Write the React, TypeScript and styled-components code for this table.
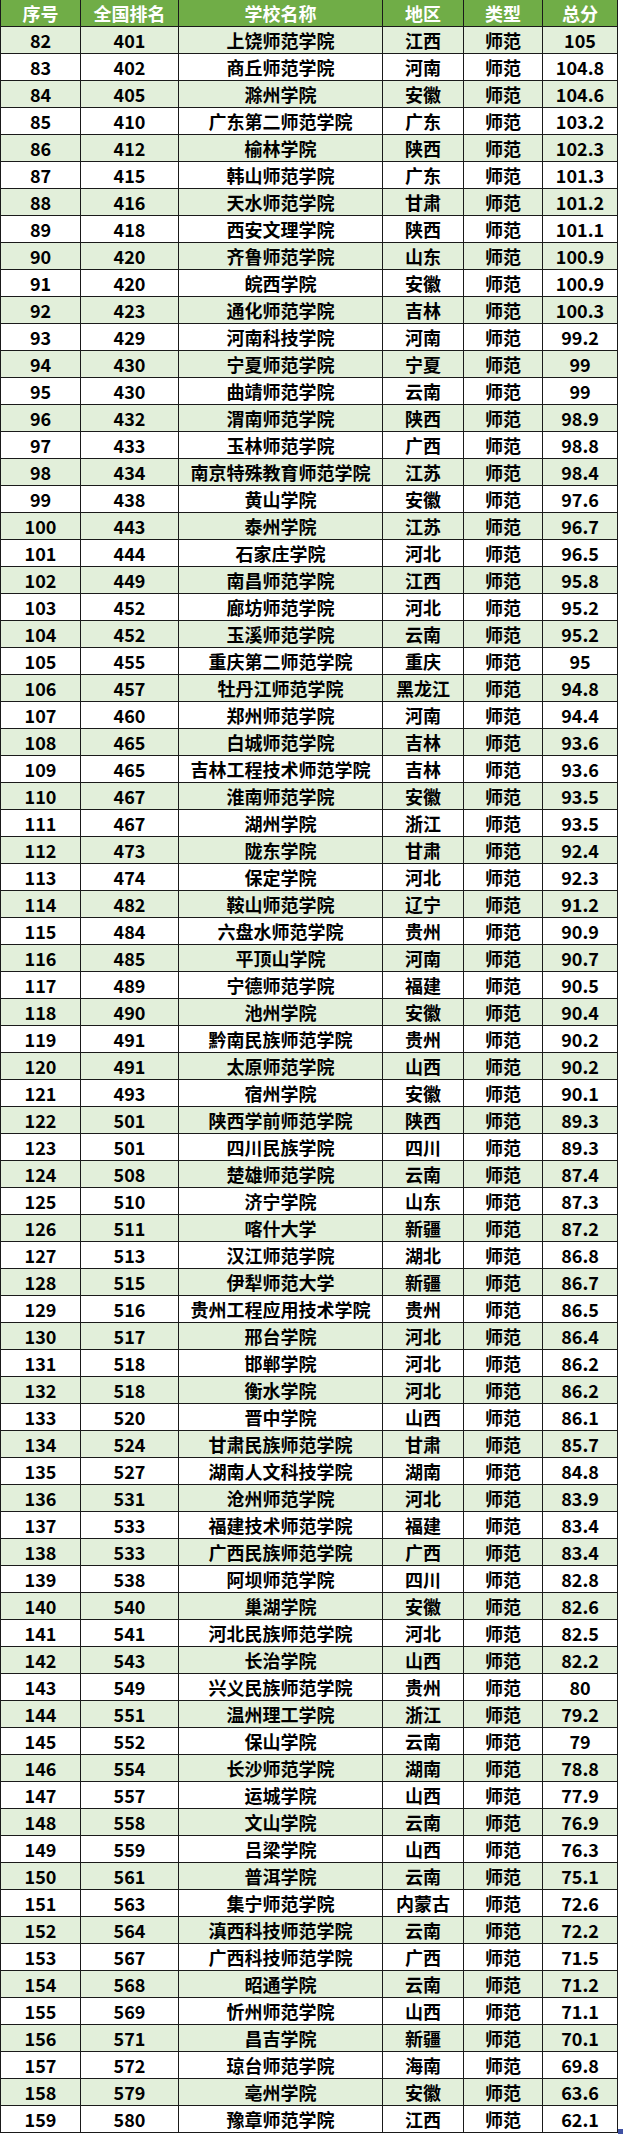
import React from "react";
import styled, { createGlobalStyle } from "styled-components";

const GlobalStyle = createGlobalStyle`
  html, body {
    margin: 0;
    padding: 0;
    background: #ffffff;
  }
  body {
    font-family: "Noto Sans CJK SC", "Noto Sans", sans-serif;
  }
`;

type School = [number, number, string, string, string, string];

const rows: School[] = [
  [82, 401, "上饶师范学院", "江西", "师范", "105"],
  [83, 402, "商丘师范学院", "河南", "师范", "104.8"],
  [84, 405, "滁州学院", "安徽", "师范", "104.6"],
  [85, 410, "广东第二师范学院", "广东", "师范", "103.2"],
  [86, 412, "榆林学院", "陕西", "师范", "102.3"],
  [87, 415, "韩山师范学院", "广东", "师范", "101.3"],
  [88, 416, "天水师范学院", "甘肃", "师范", "101.2"],
  [89, 418, "西安文理学院", "陕西", "师范", "101.1"],
  [90, 420, "齐鲁师范学院", "山东", "师范", "100.9"],
  [91, 420, "皖西学院", "安徽", "师范", "100.9"],
  [92, 423, "通化师范学院", "吉林", "师范", "100.3"],
  [93, 429, "河南科技学院", "河南", "师范", "99.2"],
  [94, 430, "宁夏师范学院", "宁夏", "师范", "99"],
  [95, 430, "曲靖师范学院", "云南", "师范", "99"],
  [96, 432, "渭南师范学院", "陕西", "师范", "98.9"],
  [97, 433, "玉林师范学院", "广西", "师范", "98.8"],
  [98, 434, "南京特殊教育师范学院", "江苏", "师范", "98.4"],
  [99, 438, "黄山学院", "安徽", "师范", "97.6"],
  [100, 443, "泰州学院", "江苏", "师范", "96.7"],
  [101, 444, "石家庄学院", "河北", "师范", "96.5"],
  [102, 449, "南昌师范学院", "江西", "师范", "95.8"],
  [103, 452, "廊坊师范学院", "河北", "师范", "95.2"],
  [104, 452, "玉溪师范学院", "云南", "师范", "95.2"],
  [105, 455, "重庆第二师范学院", "重庆", "师范", "95"],
  [106, 457, "牡丹江师范学院", "黑龙江", "师范", "94.8"],
  [107, 460, "郑州师范学院", "河南", "师范", "94.4"],
  [108, 465, "白城师范学院", "吉林", "师范", "93.6"],
  [109, 465, "吉林工程技术师范学院", "吉林", "师范", "93.6"],
  [110, 467, "淮南师范学院", "安徽", "师范", "93.5"],
  [111, 467, "湖州学院", "浙江", "师范", "93.5"],
  [112, 473, "陇东学院", "甘肃", "师范", "92.4"],
  [113, 474, "保定学院", "河北", "师范", "92.3"],
  [114, 482, "鞍山师范学院", "辽宁", "师范", "91.2"],
  [115, 484, "六盘水师范学院", "贵州", "师范", "90.9"],
  [116, 485, "平顶山学院", "河南", "师范", "90.7"],
  [117, 489, "宁德师范学院", "福建", "师范", "90.5"],
  [118, 490, "池州学院", "安徽", "师范", "90.4"],
  [119, 491, "黔南民族师范学院", "贵州", "师范", "90.2"],
  [120, 491, "太原师范学院", "山西", "师范", "90.2"],
  [121, 493, "宿州学院", "安徽", "师范", "90.1"],
  [122, 501, "陕西学前师范学院", "陕西", "师范", "89.3"],
  [123, 501, "四川民族学院", "四川", "师范", "89.3"],
  [124, 508, "楚雄师范学院", "云南", "师范", "87.4"],
  [125, 510, "济宁学院", "山东", "师范", "87.3"],
  [126, 511, "喀什大学", "新疆", "师范", "87.2"],
  [127, 513, "汉江师范学院", "湖北", "师范", "86.8"],
  [128, 515, "伊犁师范大学", "新疆", "师范", "86.7"],
  [129, 516, "贵州工程应用技术学院", "贵州", "师范", "86.5"],
  [130, 517, "邢台学院", "河北", "师范", "86.4"],
  [131, 518, "邯郸学院", "河北", "师范", "86.2"],
  [132, 518, "衡水学院", "河北", "师范", "86.2"],
  [133, 520, "晋中学院", "山西", "师范", "86.1"],
  [134, 524, "甘肃民族师范学院", "甘肃", "师范", "85.7"],
  [135, 527, "湖南人文科技学院", "湖南", "师范", "84.8"],
  [136, 531, "沧州师范学院", "河北", "师范", "83.9"],
  [137, 533, "福建技术师范学院", "福建", "师范", "83.4"],
  [138, 533, "广西民族师范学院", "广西", "师范", "83.4"],
  [139, 538, "阿坝师范学院", "四川", "师范", "82.8"],
  [140, 540, "巢湖学院", "安徽", "师范", "82.6"],
  [141, 541, "河北民族师范学院", "河北", "师范", "82.5"],
  [142, 543, "长治学院", "山西", "师范", "82.2"],
  [143, 549, "兴义民族师范学院", "贵州", "师范", "80"],
  [144, 551, "温州理工学院", "浙江", "师范", "79.2"],
  [145, 552, "保山学院", "云南", "师范", "79"],
  [146, 554, "长沙师范学院", "湖南", "师范", "78.8"],
  [147, 557, "运城学院", "山西", "师范", "77.9"],
  [148, 558, "文山学院", "云南", "师范", "76.9"],
  [149, 559, "吕梁学院", "山西", "师范", "76.3"],
  [150, 561, "普洱学院", "云南", "师范", "75.1"],
  [151, 563, "集宁师范学院", "内蒙古", "师范", "72.6"],
  [152, 564, "滇西科技师范学院", "云南", "师范", "72.2"],
  [153, 567, "广西科技师范学院", "广西", "师范", "71.5"],
  [154, 568, "昭通学院", "云南", "师范", "71.2"],
  [155, 569, "忻州师范学院", "山西", "师范", "71.1"],
  [156, 571, "昌吉学院", "新疆", "师范", "70.1"],
  [157, 572, "琼台师范学院", "海南", "师范", "69.8"],
  [158, 579, "亳州学院", "安徽", "师范", "63.6"],
  [159, 580, "豫章师范学院", "江西", "师范", "62.1"],
];

const headers = ["序号", "全国排名", "学校名称", "地区", "类型", "总分"];
const widths = [80, 98, 204, 81, 79, 75];

const Sheet = styled.div`
  position: relative;
  width: 623px;
  height: 2134px;
  overflow: hidden;
`;

const Table = styled.table`
  border-collapse: collapse;
  table-layout: fixed;
  width: 618px;
  margin-left: 0;
`;

const HeadCell = styled.th`
  height: 26px;
  padding: 0;
  border: 1px solid #1a1a1a;
  border-top: none;
  background: #70ad47;
  color: #ffffff;
  font-size: 18px;
  font-weight: 700;
  line-height: 26px;
  text-align: center;
  white-space: nowrap;
`;

const Row = styled.tr<{ $shade: boolean }>`
  background: ${(p) => (p.$shade ? "#e2efda" : "#ffffff")};
`;

const Cell = styled.td`
  height: 26px;
  padding: 0;
  border: 1px solid #1a1a1a;
  color: #000000;
  font-size: 18px;
  font-weight: 700;
  line-height: 26px;
  text-align: center;
  white-space: nowrap;
  overflow: hidden;
`;

const Handle = styled.div`
  position: absolute;
  right: 0;
  bottom: 0;
  width: 5px;
  height: 5px;
  background: #3f51a3;
`;

export default function App() {
  return (
    <>
      <GlobalStyle />
      <Sheet>
        <Table>
          <colgroup>
            {widths.map((w, i) => (
              <col key={i} style={{ width: w }} />
            ))}
          </colgroup>
          <thead>
            <tr>
              {headers.map((h) => (
                <HeadCell key={h}>{h}</HeadCell>
              ))}
            </tr>
          </thead>
          <tbody>
            {rows.map((r, i) => (
              <Row key={r[0]} $shade={i % 2 === 0}>
                {r.map((v, j) => (
                  <Cell key={j}>{v}</Cell>
                ))}
              </Row>
            ))}
          </tbody>
        </Table>
        <Handle />
      </Sheet>
    </>
  );
}
